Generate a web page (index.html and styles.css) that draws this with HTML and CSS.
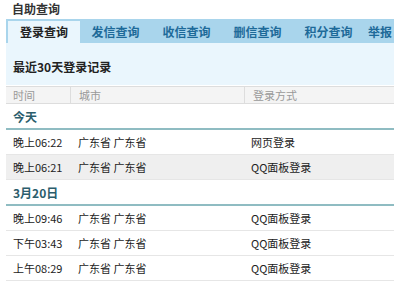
FILE: index.html
```html
<!DOCTYPE html>
<html lang="zh-CN">
<head>
    <meta charset="UTF-8">
    <title>自助查询</title>
    <link rel="stylesheet" href="styles.css">
</head>
<body>
    <div class="page">
        <div class="title">自助查询</div>
        <div class="tabs">
            <div class="tab active">登录查询</div>
            <div class="tab">发信查询</div>
            <div class="tab">收信查询</div>
            <div class="tab">删信查询</div>
            <div class="tab">积分查询</div>
            <div class="tab last">举报</div>
        </div>
        <div class="panel">最近30天登录记录</div>
        <div class="row head">
            <div class="c-time">时间</div>
            <div class="c-city">城市</div>
            <div class="c-way">登录方式</div>
        </div>
        <div class="day">今天</div>
        <div class="row">
            <div class="c-time">晚上06:22</div>
            <div class="c-city">广东省 广东省</div>
            <div class="c-way">网页登录</div>
        </div>
        <div class="row alt">
            <div class="c-time">晚上06:21</div>
            <div class="c-city">广东省 广东省</div>
            <div class="c-way">QQ面板登录</div>
        </div>
        <div class="day">3月20日</div>
        <div class="row">
            <div class="c-time">晚上09:46</div>
            <div class="c-city">广东省 广东省</div>
            <div class="c-way">QQ面板登录</div>
        </div>
        <div class="row">
            <div class="c-time">下午03:43</div>
            <div class="c-city">广东省 广东省</div>
            <div class="c-way">QQ面板登录</div>
        </div>
        <div class="row">
            <div class="c-time">上午08:29</div>
            <div class="c-city">广东省 广东省</div>
            <div class="c-way">QQ面板登录</div>
        </div>
    </div>
</body>
</html>
```

FILE: styles.css
```css
body {
    margin: 0;
    background: #fff;
    font-family: "Noto Sans CJK SC", "Liberation Sans", sans-serif;
    font-size: 11px;
    color: #222;
    overflow: hidden;
}
.page {
    padding: 0 6px;
}
.title {
    height: 19px;
    line-height: 18px;
    padding-left: 6px;
    font-size: 12px;
    font-weight: bold;
    color: #333;
}
.tabs {
    display: flex;
    height: 24px;
    background: #a9d5ec;
    padding-left: 2px;
    overflow: hidden;
    white-space: nowrap;
}
.tab {
    flex: 0 0 71px;
    margin-top: 2px;
    text-align: center;
    line-height: 22px;
    font-size: 12px;
    font-weight: bold;
    color: #1d6a99;
}
.tab.active {
    flex-basis: 72px;
    background: #eaf6fd;
    color: #222;
}
.tab.last {
    flex: 1;
    text-align: left;
    padding-left: 4px;
}
.panel {
    height: 42px;
    background: #eaf6fd;
    padding-left: 7px;
    line-height: 48px;
    font-size: 12px;
    font-weight: bold;
    color: #222;
}
.row {
    display: flex;
    height: 24px;
    line-height: 24px;
    border-bottom: 1px solid #e6e6e6;
}
.row.alt {
    background: #efefef;
}
.row.head {
    height: 16px;
    line-height: 16px;
    margin-top: 1px;
    background: #f4f4f4;
    border-top: 1px solid #ddd;
    border-bottom: 1px solid #ddd;
    color: #999;
}
.c-time {
    width: 57px;
    padding-left: 7px;
}
.c-city {
    width: 165px;
    padding-left: 8px;
}
.c-way {
    padding-left: 8px;
}
.head .c-city,
.head .c-way {
    border-left: 1px solid #ddd;
}
.day {
    height: 24px;
    line-height: 26px;
    padding-left: 7px;
    font-size: 12px;
    font-weight: bold;
    color: #2b5d6c;
    border-bottom: 2px solid #8fbcc2;
}
```
